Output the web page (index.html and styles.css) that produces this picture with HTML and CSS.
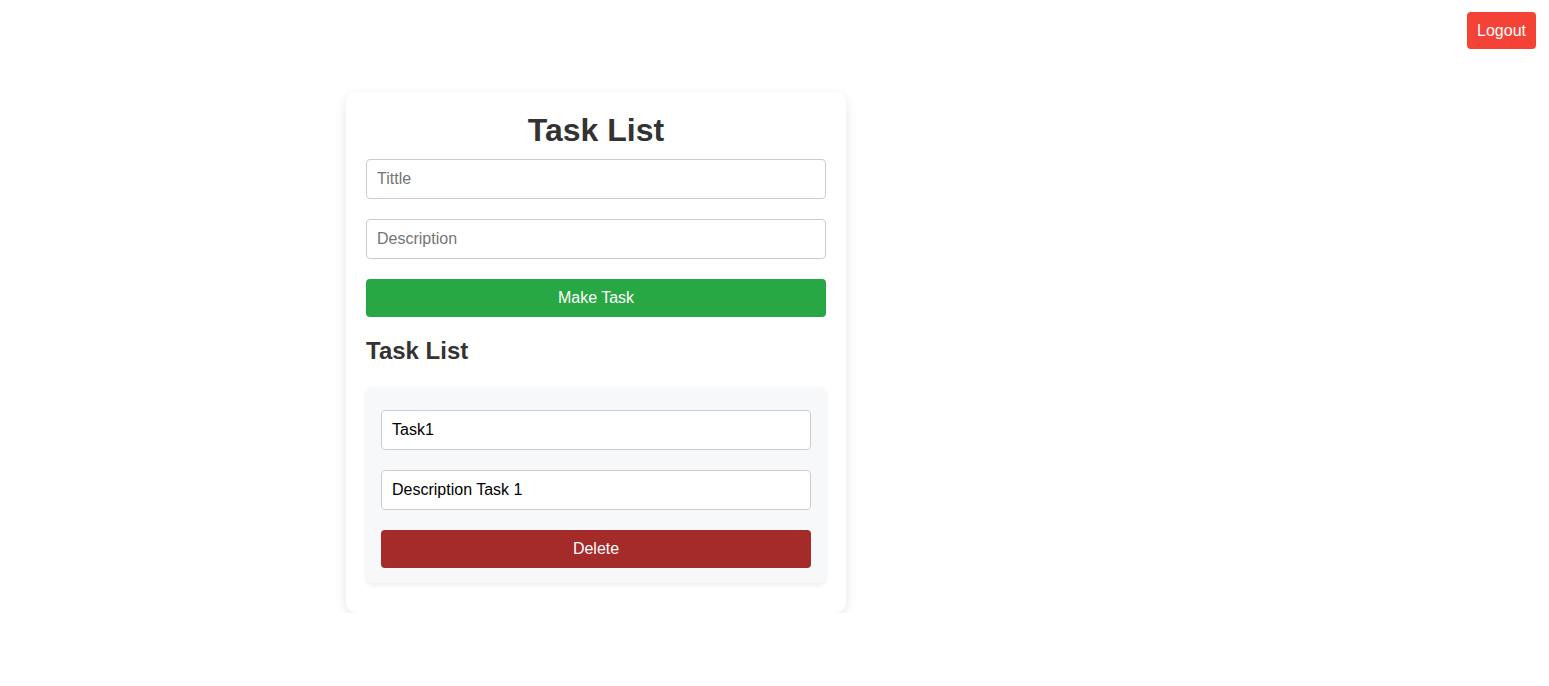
FILE: index.html
```html
<!DOCTYPE html>
<html lang="en">
<head>
<meta charset="utf-8">
<title>Task List</title>
<link rel="stylesheet" href="styles.css">
</head>
<body>
<button class="logout">Logout</button>
<div class="card">
  <h1 class="title">Task List</h1>
  <input class="field" type="text" placeholder="Tittle">
  <input class="field" type="text" placeholder="Description">
  <button class="btn btn-make">Make Task</button>
  <h2 class="subtitle">Task List</h2>
  <div class="task">
    <input class="field" type="text" value="Task1">
    <input class="field" type="text" value="Description Task 1">
    <button class="btn btn-delete">Delete</button>
  </div>
</div>
</body>
</html>
```
FILE: styles.css
```css
* { box-sizing: border-box; }
html, body { margin: 0; padding: 0; background: #fff; }
body {
  font-family: "Liberation Sans", Arial, sans-serif;
  color: #333;
  padding-top: 92px;
  padding-left: 346px;
}
.logout {
  position: absolute;
  top: 12px;
  right: 13px;
  background: #f44336;
  color: #fff;
  border: none;
  border-radius: 4px;
  font-family: inherit;
  font-size: 16px;
  padding: 9px 10px;
  line-height: 19px;
}
.card {
  width: 500px;
  background: #fff;
  border-radius: 10px;
  padding: 20px;
  box-shadow: 0 4px 12px rgba(0,0,0,0.1);
}
.title {
  margin: 0 0 10px;
  text-align: center;
  font-size: 32px;
  font-weight: bold;
  color: #333;
}
.field {
  display: block;
  width: 100%;
  height: 40px;
  margin: 0 0 20px;
  padding: 0 10px;
  border: 1px solid #ccc;
  border-radius: 4px;
  font-family: inherit;
  font-size: 16px;
  color: #000;
  background: #fff;
}
.field::placeholder { color: #757575; }
.btn {
  display: block;
  width: 100%;
  height: 38px;
  border: none;
  border-radius: 4px;
  color: #fff;
  font-family: inherit;
  font-size: 16px;
}
.btn-make { background: #28a745; }
.btn-delete { background: #a52a2a; }
.subtitle {
  margin: 20px 0 22px;
  font-size: 24px;
  font-weight: bold;
  color: #333;
}
.task {
  background: #f7f8fa;
  border-radius: 6px;
  padding: 23px 15px 15px;
  margin-bottom: 10px;
  box-shadow: 0 2px 4px rgba(0,0,0,0.08);
}
```
